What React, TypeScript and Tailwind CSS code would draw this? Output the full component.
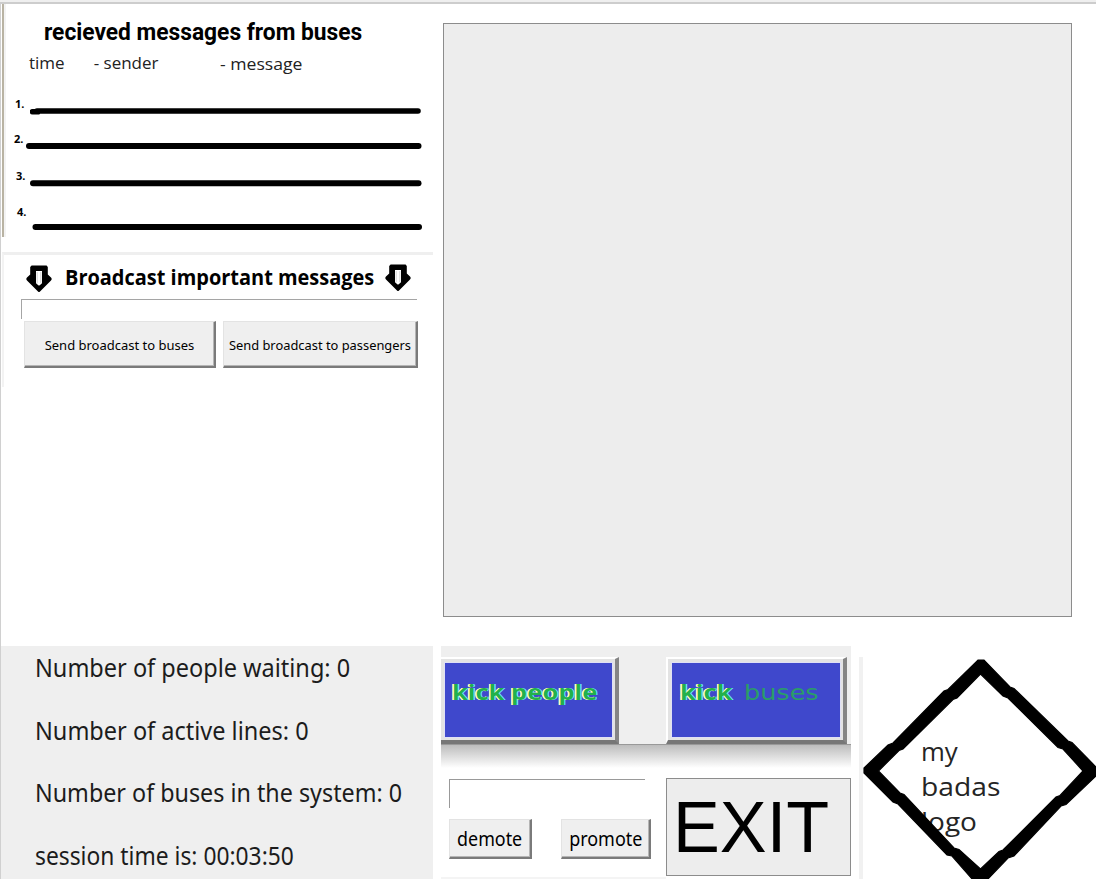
import type { ReactNode } from "react";

function Label({ className = "", children }: { className?: string; children: ReactNode }) {
  return <span className={"block w-max whitespace-pre " + className}>{children}</span>;
}

function DownArrow({ className }: { className: string }) {
  return (
    <svg className={className} width="26" height="28" viewBox="0 0 26 28">
      <path
        d="M5.6 .5H20.6L21.8 2V9.6L25 12.6Q26.4 14 25 15.4L14 26.6Q13 27.6 12 26.6L1 15.4Q-.4 14 1 12.6L4.2 9.6V2Z"
        fill="#000"
      />
      <path d="M10 6H16V18.2L13.4 20.5H12.6L10 18.2Z" fill="#fff" />
      <path d="M11.2 7V18.2M14.8 7V18.2" stroke="#777" strokeWidth="1" opacity=".3" />
    </svg>
  );
}

const toolButton =
  "flex justify-center border-t border-l border-t-[#e3e3e3] border-l-[#e3e3e3] border-r-2 border-b-2 border-r-[#7a7a7a] border-b-[#7a7a7a] bg-[#efefef] shadow-[inset_-1px_-1px_0_#b5b5b5] text-black";

function ReceivedMessages() {
  return (
    <section className="flex h-[233px] w-[432px] border-l-2 border-[#b9b3a3] shadow-[inset_2px_0_0_#f3f3f3]">
      <div className="flex w-full flex-col">
        <Label className="mt-[13px] ml-[40px] h-[29px] origin-left scale-x-[0.948] font-['Roboto'] text-[24px] leading-[30px] font-bold">
          recieved messages from buses
        </Label>
        <div className="ml-[25px] flex h-[34px] font-['Open_Sans'] text-[17px] leading-[33px] text-[#222]">
          <Label className="mr-[29px]">time</Label>
          <Label className="mr-[61px]">- sender</Label>
          <Label className="origin-left scale-x-[1.035] pt-px">- message</Label>
        </div>
        <ol className="flex flex-col font-['Noto_Sans'] text-[11px] leading-[12px] font-bold">
          <li className="flex h-[35px] items-start pt-[18px] pl-[11px]">
            <span className="w-[15px]">1.</span>
            <svg width="391" height="8" className="mt-[9px]" viewBox="0 0 391 8">
              <path d="M2.5 4.7H8M7 4H388" stroke="#000" strokeWidth="5.6" strokeLinecap="round" />
            </svg>
          </li>
          <li className="flex h-[37px] items-start pt-[18px] pl-[10px]">
            <span className="w-[12px]">2.</span>
            <svg width="396" height="8" className="mt-[9px]" viewBox="0 0 396 8">
              <path d="M3 4H392.5" stroke="#000" strokeWidth="6" strokeLinecap="round" />
            </svg>
          </li>
          <li className="flex h-[37px] items-start pt-[18px] pl-[12px]">
            <span className="w-[14px]">3.</span>
            <svg width="392" height="8" className="mt-[9px]" viewBox="0 0 392 8">
              <path d="M3 4.2H388.5" stroke="#000" strokeWidth="6" strokeLinecap="round" />
            </svg>
          </li>
          <li className="flex h-[40px] items-start pt-[17px] pl-[13px]">
            <span className="w-[15px]">4.</span>
            <svg width="390" height="8" className="mt-[17px]" viewBox="0 0 390 8">
              <path d="M3.5 4H387" stroke="#000" strokeWidth="6" strokeLinecap="round" />
            </svg>
          </li>
        </ol>
      </div>
    </section>
  );
}

function Broadcast() {
  return (
    <section className="mt-[15px] h-[135px] w-[431px] border-t-[3px] border-l-2 border-t-[#efefef] border-l-[#f3f3f3]">
      <div className="flex h-[44px] w-full pl-[22px]">
        <DownArrow className="mt-[10px]" />
        <div className="w-[333px] pl-[13px]">
          <Label className="origin-left scale-x-[0.907] font-['Open_Sans'] text-[22px] leading-[42px] font-bold">
            Broadcast important messages
          </Label>
        </div>
        <DownArrow className="mt-[9px]" />
      </div>
      <input className="ml-[17px] block h-[20px] w-[396px] border-t border-l border-[#a5a5a5] bg-white outline-none" />
      <div className="mt-[2px] ml-[20px] flex gap-[7px] font-['Noto_Sans'] text-[13px]">
        <button className={toolButton + " h-[47px] w-[192px] leading-[47px]"}>
          <Label>Send broadcast to buses</Label>
        </button>
        <button className={toolButton + " h-[47px] w-[195px] leading-[47px]"}>
          <Label className="scale-x-[0.99]">Send broadcast to passengers</Label>
        </button>
      </div>
    </section>
  );
}

function Stats() {
  return (
    <section className="flex h-[234px] w-[432px] flex-col bg-[#efefef] pl-[34px] font-['Noto_Sans'] text-[25px] text-[#1c1c1c]">
      <Label className="mt-[-10px] h-[62.5px] origin-left scale-x-[0.94] leading-[62px]">Number of people waiting: 0</Label>
      <Label className="h-[62.5px] origin-left scale-x-[0.94] leading-[62px]">Number of active lines: 0</Label>
      <Label className="h-[62.5px] origin-left scale-x-[0.932] leading-[62px]">Number of buses in the system: 0</Label>
      <Label className="h-[54px] origin-left scale-x-[0.912] leading-[62px]">session time is: 00:03:50</Label>
    </section>
  );
}

const fringe = "text-[#22b14c] [text-shadow:-1px_0_0_#fffbd0,1px_0_0_#7fe8f5,-1.5px_0_0_#fffbd0]";

function KickBar() {
  return (
    <div className="h-[98px] w-[410px] bg-[#efefef]">
      <div className="flex pt-[11px]">
        <button className="flex h-[87px] w-[178px] border-t-2 border-r-4 border-b-4 border-t-white border-r-[#858585] border-b-[#777] bg-[#e3e3e3] pt-[3px] pr-[2px] pb-[2px] pl-[3px]">
          <div className="flex h-full w-full border border-[#dfe0f5] bg-[#3f48cc] pl-[7px] font-['Noto_Sans'] text-[22px] leading-[56px] font-bold">
            <Label className={"origin-left scale-x-[1.16] " + fringe}>kick people</Label>
          </div>
        </button>
        <button className="ml-[47px] flex h-[87px] w-[181px] border-t-2 border-r-4 border-b-4 border-l-2 border-t-white border-r-[#858585] border-b-[#777] border-l-white bg-[#e3e3e3] pt-[3px] pr-[2px] pb-[2px] pl-[3px]">
          <div className="flex h-full w-full border border-[#dfe0f5] bg-[#3f48cc] pl-[8px] font-['Noto_Sans'] text-[22px] leading-[56px]">
            <div className="w-[64px]">
              <Label className={"origin-left scale-x-[1.16] font-bold " + fringe}>kick</Label>
            </div>
            <Label className="origin-left scale-x-[1.16] pt-[2px] font-['DejaVu_Sans'] text-[#2a9d68]">buses</Label>
          </div>
        </button>
      </div>
    </div>
  );
}

function Controls() {
  return (
    <section className="flex w-[410px] flex-col">
      <KickBar />
      <div className="h-[24px] border-t border-[#999] bg-linear-to-b from-[#bdbdbd] to-white" />
      <div className="flex h-[111px] pl-[8px]">
        <div className="h-[109px] w-[217px] pt-[11px]">
          <input className="block h-[29px] w-[196px] border-t border-l border-[#999] bg-white outline-none" />
          <div className="mt-[11px] flex gap-[29px] font-['Noto_Sans'] text-[19px]">
            <button className={toolButton + " h-[40px] w-[83px] leading-[39px]"}>
              <Label className="scale-x-[0.94]">demote</Label>
            </button>
            <button className={toolButton + " h-[40px] w-[90px] leading-[39px]"}>
              <Label className="scale-x-[0.945]">promote</Label>
            </button>
          </div>
          <div className="mt-[18px] -ml-[8px] h-[2px] w-[225px] bg-[#f4f4f4]" />
        </div>
        <button className="mt-[10px] flex h-[98px] w-[185px] border border-[#8c8c8c] bg-[#ededed] pl-[6px] font-['Liberation_Sans'] text-[72px] leading-[96px]">
          <Label className="origin-left scale-x-[0.975]">EXIT</Label>
        </button>
      </div>
    </section>
  );
}

function Logo() {
  return (
    <section className="mt-[11px] ml-[8px] grid h-[223px] w-[237px] border-l-4 border-[#f1f1f1]">
      <div className="col-start-1 row-start-1 pt-[77px] pl-[58px] font-['Open_Sans'] text-[25px] leading-[35px] text-[#252525]">
        <Label className="origin-left scale-x-[1.03]">my</Label>
        <Label className="origin-left scale-x-[1.13]">badas</Label>
        <Label className="origin-left scale-x-[1.12]">logo</Label>
      </div>
      <svg className="z-10 col-start-1 row-start-1" width="233" height="223" viewBox="863 657 233 223">
        <path
          d="M978 660H984L1010 687L1014 688.5L1068 741L1072 742.5L1096 767V776L1066 804.5L1061 806L1014 856L1008 858L987 880H973L952 856L947 855L898 804L893 802L864 773V768L888 745L893 743L944 691L948 689.5Z M980.5 674L957 698L953 699.5L903 749L899 750.5L878.5 771L900 793L904 794.5L954 848L959 849.5L980.5 869L999 851.5L1003 850L1056 797L1060 795.5L1083 771L1063 749L1058 747.5L1008 698L1003 696Z"
          fill="#000"
          stroke="#000"
          strokeWidth="1.2"
          fillRule="evenodd"
        />
      </svg>
    </section>
  );
}

export default function App() {
  return (
    <main className="flex h-[879px] w-[1096px] flex-col overflow-hidden bg-white text-black">
      <div className="h-[4px] shrink-0 border-b-2 border-[#cdcdcd] bg-[#efefef]" />
      <div className="flex h-[875px] flex-col border-l border-[#d0d0d0]">
        <div className="flex h-[642px]">
          <div className="w-[442px] pl-px">
            <ReceivedMessages />
            <Broadcast />
          </div>
          <div className="mt-[19px] h-[594px] w-[629px] border border-[#8c8c8c] bg-[#ededed]" />
        </div>
        <div className="flex h-[233px]">
          <Stats />
          <div className="w-[8px]" />
          <Controls />
          <Logo />
        </div>
      </div>
    </main>
  );
}
